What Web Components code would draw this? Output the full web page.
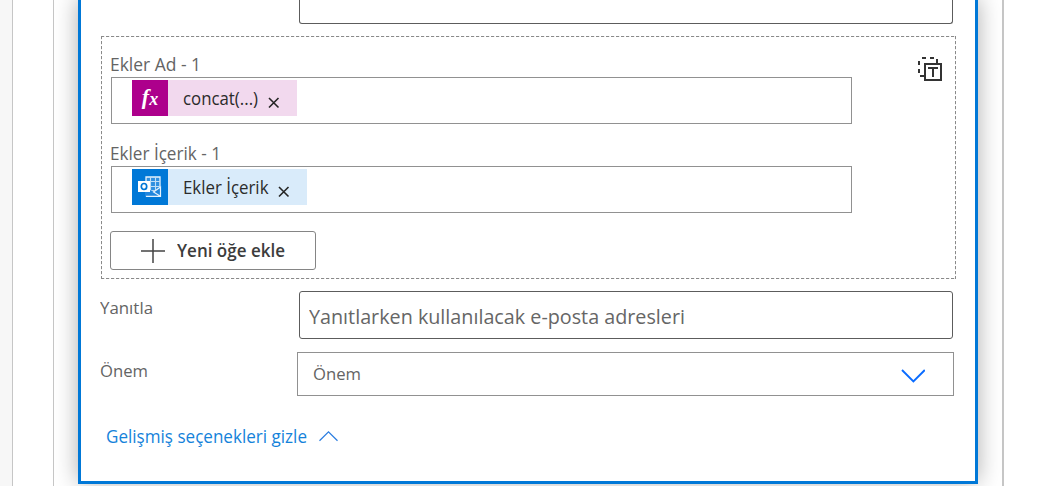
<!DOCTYPE html>
<html lang="tr">
<head>
<meta charset="utf-8">
<title>E-posta eylemi</title>
<style>
html,body{margin:0;height:100%;overflow:hidden;background:#fff}
body{font-family:"Open Sans","Noto Sans",sans-serif;font-weight:400;color:#646464}
</style>
</head>
<body>
<flow-canvas>
  <action-card>
    <text-field class="cut"></text-field>
    <attachment-group>
      <attachment-input label="Ekler Ad - 1" label-width="91">
        <value-token kind="fx" label="concat(...)" label-width="75"></value-token>
      </attachment-input>
      <attachment-input label="Ekler İçerik - 1" label-width="111">
        <value-token kind="outlook" label="Ekler İçerik" label-width="85.5"></value-token>
      </attachment-input>
      <add-button></add-button>
    </attachment-group>
    <form-row label="Yanıtla" label-width="53"><text-field placeholder="Yanıtlarken kullanılacak e-posta adresleri" text-width="376"></text-field></form-row>
    <form-row class="select" label="Önem" label-width="48"><select-field></select-field></form-row>
    <toggle-link></toggle-link>
  </action-card>
</flow-canvas>
<script>
const define = (name, render, after) => customElements.define(name, class extends HTMLElement {
  connectedCallback() {
    if (this.shadowRoot) return;
    this.attachShadow({mode: 'open'}).innerHTML = render(this);
    if (after) after(this);
  }
});

/* A single line of text condensed or widened to the width it is given. */
define('fit-text', () => `<style>
:host{display:block;white-space:nowrap;line-height:24px;height:24px}
span{display:inline-block;transform-origin:0 50%}
</style><span><slot></slot></span>`, el => {
  const w = +el.getAttribute('width');
  const s = el.shadowRoot.querySelector('span');
  el.style.width = w + 'px';
  s.style.transform = `scaleX(${w / s.getBoundingClientRect().width})`;
});

define('flow-canvas', () => `<style>
:host{display:flex;box-sizing:border-box;width:1059px;height:486px;overflow:hidden;background:#fff}
.rail{flex:none;box-sizing:border-box;width:13px;background:#f7f7f7;border-right:1px solid #c6c6c6}
.scope{flex:none;box-sizing:border-box;width:951px;margin-left:40px;border-left:1px solid #c6c6c6;border-right:2px solid #c6c6c6;padding-left:24px}
</style><div class="rail"></div><div class="scope"><slot></slot></div>`);

define('action-card', () => `<style>
:host{display:block;box-sizing:border-box;width:900px;height:484px;border:3px solid #0078d7;border-top:0;background:#fff;box-shadow:0 -2px 22px rgba(0,0,0,.32)}
::slotted(.cut){margin-left:218px;height:24px;border-top:0!important;border-radius:0 0 3px 3px}
::slotted(attachment-group){margin:12px 0 0 20px}
::slotted(form-row){margin:12px 0 0 19px}
::slotted(form-row.select){margin-top:13px}
::slotted(toggle-link){margin:29px 0 0 25px}
</style><slot></slot>`);

define('attachment-group', () => `<style>
:host{display:block;position:relative;box-sizing:border-box;width:855px;height:243px;padding:15px 0 0 8px}
.edge{position:absolute;inset:0;width:855px;height:243px}
.mode{position:absolute;left:817px;top:21px}
::slotted(attachment-input:nth-of-type(2)){margin-top:16px}
::slotted(add-button){margin:18px 0 0 1px}
</style>
<svg class="edge" fill="none" stroke="#8a8a8a" stroke-dasharray="3.2 1.8"><path d="M0 .5H855M0 242.5H855M.5 0V243M854.5 0V243"/></svg>
<svg class="mode" width="24" height="24" fill="#333"><path d="M4 0h4v2H4zM12 0h4v2h-4zM18 2h2v4h-2zM0 4h2v4H0zM0 12h2v4H0zM2 18h4v2H2z"/><path d="M6 6h18v18H6zm2 2v14h14V8z" fill-rule="evenodd"/><path d="M10 10h10v2h-4v8h-2v-8h-4z"/></svg>
<slot></slot>`);

define('attachment-input', el => `<style>
:host{display:block}
fit-text{margin-left:.5px;font-size:17.3px;height:26px;line-height:27px}
.box{box-sizing:border-box;width:741px;height:47px;margin-left:2px;border:1px solid #919191;padding:2px 0 0 20px}
</style><fit-text width="${el.getAttribute('label-width')}">${el.getAttribute('label')}</fit-text><div class="box"><slot></slot></div>`);

define('value-token', el => {
  const fx = el.getAttribute('kind') === 'fx';
  const icon = fx ? '<span class="fx">f<i>x</i></span>' : `<svg width="24" height="24" viewBox="0 0 24 24">
<path d="M8 2h14v14H8z" fill="#2f8fe0" stroke="#e6f2fc" stroke-width="1.3"/>
<path d="M8 6.5h14M8 11.5h14M12.5 2v14M17.5 2v14" stroke="#c0def6" stroke-width="1.1" fill="none"/>
<path d="M7 13l8.5 3.5L23 11v11H7z" fill="#2186dd"/><path d="M8 21.3h14.5V12L15.5 17l7 4.3" fill="none" stroke="#e6f2fc" stroke-width="1.2"/>
<path d="M0 6h12v11H0z" fill="#fff"/><ellipse cx="6" cy="11.5" rx="2.7" ry="3" fill="none" stroke="#0078d7" stroke-width="1.7"/></svg>`;
  return `<style>
:host{display:flex;box-sizing:border-box;width:${fx ? 165 : 175}px;height:36px;background:${fx ? '#f2d9ee' : '#d9ebfa'};color:#2b2b2b}
.icon{flex:none;width:36px;height:36px;background:${fx ? '#ad008c' : '#0078d7'};display:flex;align-items:center;justify-content:center}
.fx{font:italic bold 22px/28px "Liberation Serif",serif;color:#fff;padding-bottom:1px}
.fx i{font-size:18px;position:relative;top:1px}
fit-text{margin:7px 0 0 14.5px;font-size:17.3px}
.x{margin:17px 0 0 ${fx ? 10.5 : 9.5}px}
</style><div class="icon">${icon}</div><fit-text width="${el.getAttribute('label-width')}">${el.getAttribute('label')}</fit-text>
<svg class="x" width="12" height="12" fill="none" stroke="#262626" stroke-width="1.6"><path d="M1 1L10.5 10.5M10.5 1L1 10.5"/></svg>`;
});

define('add-button', () => `<style>
:host{display:flex;align-items:center;box-sizing:border-box;width:206px;height:39px;border:1px solid #858585;border-radius:3px;color:#3c3c3c;padding-left:30px}
fit-text{margin-left:12px;font-size:17.3px;font-weight:600}
</style><svg width="24" height="24" stroke="#444" stroke-width="1.5"><path d="M0 12H24M12 0V24"/></svg><fit-text width="108">Yeni öğe ekle</fit-text>`);

define('form-row', el => `<style>
:host{display:flex}
.label{flex:none;width:${el.className ? 197 : 199}px}
fit-text{margin:${el.className ? 7 : 5}px 0 0 .4px;font-size:17px}
</style><div class="label"><fit-text width="${el.getAttribute('label-width')}">${el.getAttribute('label')}</fit-text></div><slot></slot>`);

define('text-field', el => `<style>
:host{display:block;box-sizing:border-box;width:654px;height:48px;border:1px solid #5c5c5c;border-radius:3px;padding:13px 0 0 8.5px;background:#fff}
fit-text{font-size:20px;color:#666}
</style>${el.hasAttribute('placeholder') ? `<fit-text width="${el.getAttribute('text-width')}">${el.getAttribute('placeholder')}</fit-text>` : ''}`);

define('select-field', () => `<style>
:host{display:flex;justify-content:space-between;box-sizing:border-box;width:657px;height:44px;border:1px solid #919191;padding:9px 28px 0 15.4px}
fit-text{font-size:17px}
svg{margin-top:7px}
</style><fit-text width="48">Önem</fit-text><svg width="24" height="14" fill="none" stroke="#0a6cff" stroke-width="1.9"><path d="M1 1L12.4 12.3L23.8 1"/></svg>`);

define('toggle-link', () => `<style>
:host{display:flex;color:#1482da}
fit-text{font-size:17.3px}
svg{margin:6px 0 0 12.4px}
</style><fit-text width="201">Gelişmiş seçenekleri gizle</fit-text><svg width="19" height="11" fill="none" stroke="#2b7de0" stroke-width="1.25"><path d="M.5 9.7L9.5 .9L18.5 9.7"/></svg>`);
</script>
</body>
</html>
